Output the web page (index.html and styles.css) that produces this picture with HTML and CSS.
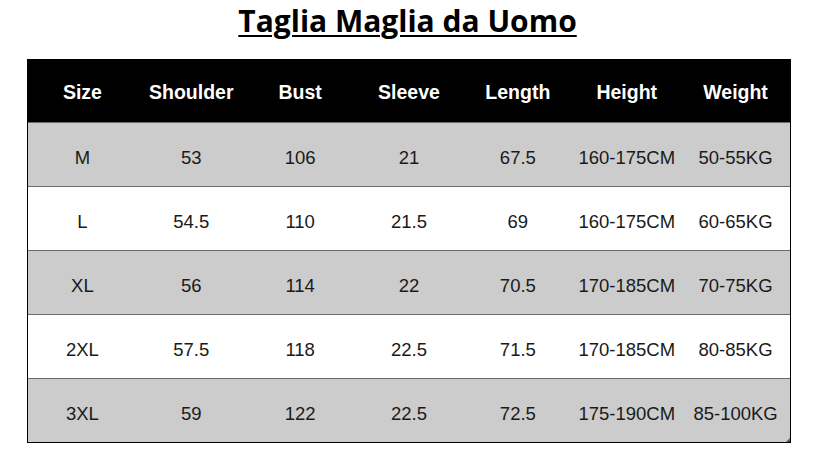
FILE: index.html
```html
<!DOCTYPE html>
<html>
<head>
<meta charset="utf-8">
<link rel="stylesheet" href="styles.css">
</head>
<body>
<h1 class="title"><span class="title-text">Taglia Maglia da Uomo</span></h1>
<div class="chart">
  <div class="row head">
    <div>Size</div><div>Shoulder</div><div>Bust</div><div>Sleeve</div><div>Length</div><div>Height</div><div>Weight</div>
  </div>
  <div class="row gray">
    <div>M</div><div>53</div><div>106</div><div>21</div><div>67.5</div><div>160-175CM</div><div>50-55KG</div>
  </div>
  <div class="row white">
    <div>L</div><div>54.5</div><div>110</div><div>21.5</div><div>69</div><div>160-175CM</div><div>60-65KG</div>
  </div>
  <div class="row gray">
    <div>XL</div><div>56</div><div>114</div><div>22</div><div>70.5</div><div>170-185CM</div><div>70-75KG</div>
  </div>
  <div class="row white">
    <div>2XL</div><div>57.5</div><div>118</div><div>22.5</div><div>71.5</div><div>170-185CM</div><div>80-85KG</div>
  </div>
  <div class="row gray last">
    <div>3XL</div><div>59</div><div>122</div><div>22.5</div><div>72.5</div><div>175-190CM</div><div>85-100KG</div>
  </div>
  <span class="corner"></span>
</div>
</body>
</html>
```
FILE: styles.css
```css
html, body {
  margin: 0;
  padding: 0;
  background: #ffffff;
}

.title {
  margin: 0;
  height: 59px;
  box-sizing: border-box;
  padding-top: 1px;
  text-align: center;
  font-family: "Open Sans", "Noto Sans", sans-serif;
  font-weight: 700;
  font-size: 30px;
  line-height: 40px;
  color: #000;
}

.title-text {
  text-decoration: underline;
  text-decoration-thickness: 2px;
  text-underline-offset: 3px;
}

.chart {
  position: relative;
  margin-left: 27px;
  width: 764px;
  box-sizing: border-box;
  border-left: 1px solid #000;
  border-right: 1px solid #000;
  border-bottom: 1px solid #000;
  font-family: "Liberation Sans", Arial, sans-serif;
}

.row {
  display: grid;
  grid-template-columns: repeat(7, 1fr);
  height: 64px;
  box-sizing: border-box;
  padding-top: 6px;
  border-bottom: 1px solid #6b6b6b;
  align-items: center;
  text-align: center;
  font-size: 18.5px;
  color: #1a1a1a;
}

.row.last {
  border-bottom: none;
  height: 63px;
}

.head {
  background: #000;
  color: #fff;
  font-weight: 700;
  font-size: 19.5px;
  padding-top: 3px;
}

.gray {
  background: #cccccc;
}

.white {
  background: #ffffff;
}

.corner {
  position: absolute;
  right: 0;
  bottom: 0;
  width: 0;
  height: 0;
  border-left: 4px solid transparent;
  border-bottom: 4px solid #3a55b0;
}
```
